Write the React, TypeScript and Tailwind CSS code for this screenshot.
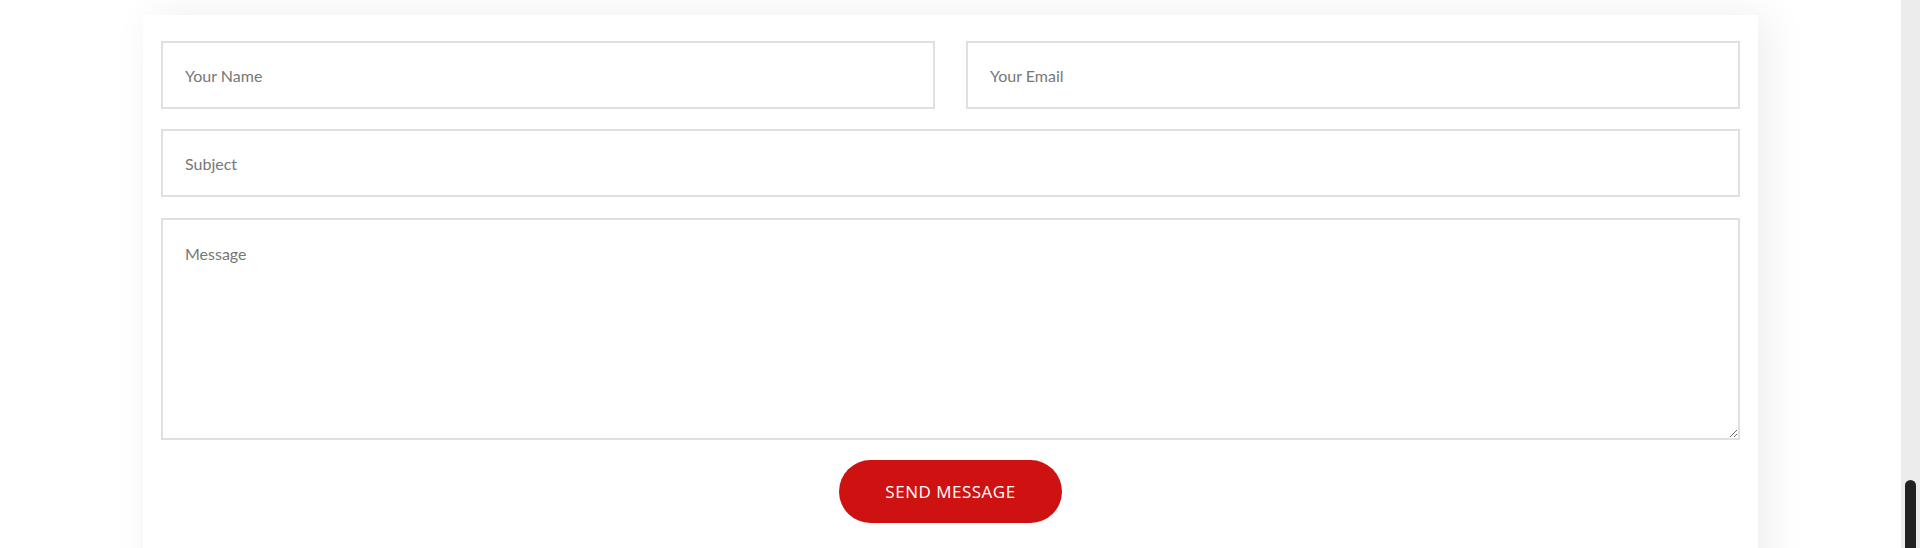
import React from "react";

export default function App() {
  return (
    <div className="flex h-[548px] w-full overflow-hidden bg-white" style={{ fontFamily: "Lato, 'Open Sans', sans-serif" }}>
      <div className="flex-1 flex justify-center">
        <div className="mt-[15px] w-[1615px] h-[600px] bg-white px-[18px] pt-[26px] shadow-[10px_0_40px_rgba(0,0,0,0.07)]">
          <form className="flex flex-col" onSubmit={(e) => e.preventDefault()}>
            <div className="grid grid-cols-2 gap-x-[31px]">
              <input
                type="text"
                placeholder="Your Name"
                className="h-[68px] border-2 border-[#e0e0e0] px-[22px] text-[16px] text-[#555] placeholder:text-[#777] outline-none"
              />
              <input
                type="email"
                placeholder="Your Email"
                className="h-[68px] border-2 border-[#e0e0e0] px-[22px] text-[16px] text-[#555] placeholder:text-[#777] outline-none"
              />
            </div>
            <input
              type="text"
              placeholder="Subject"
              className="mt-[20px] h-[68px] border-2 border-[#e0e0e0] px-[22px] text-[16px] text-[#555] placeholder:text-[#777] outline-none"
            />
            <textarea
              placeholder="Message"
              className="mt-[21px] h-[222px] border-2 border-[#e0e0e0] px-[22px] py-[22px] text-[16px] text-[#555] placeholder:text-[#777] outline-none"
            />
            <div className="mt-[20px] flex justify-center">
              <button
                type="submit"
                className="h-[63px] w-[223px] rounded-full bg-[#ce1212] text-[17px] tracking-[0.5px] text-white"
                style={{ fontFamily: "'Open Sans', sans-serif" }}
              >
                SEND MESSAGE
              </button>
            </div>
          </form>
        </div>
      </div>
      <div className="w-[19px] shrink-0 bg-[#ececec] flex justify-center pt-[480px]">
        <div className="w-[11px] h-[120px] rounded-full bg-[#222]" />
      </div>
    </div>
  );
}
